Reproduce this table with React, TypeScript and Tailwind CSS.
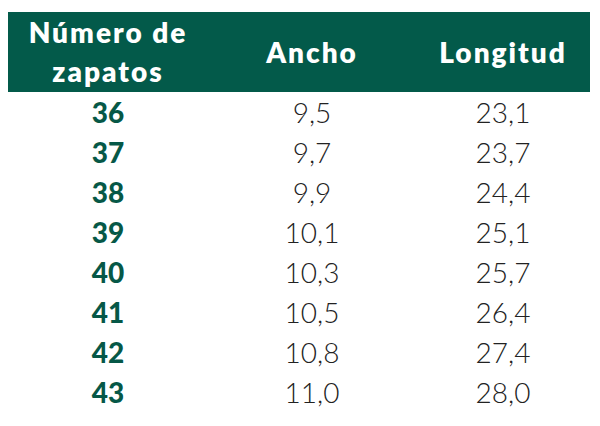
const rows = [
  ["36", "9,5", "23,1"],
  ["37", "9,7", "23,7"],
  ["38", "9,9", "24,4"],
  ["39", "10,1", "25,1"],
  ["40", "10,3", "25,7"],
  ["41", "10,5", "26,4"],
  ["42", "10,8", "27,4"],
  ["43", "11,0", "28,0"],
];

export default function App() {
  return (
    <div className="w-[600px] h-[426px] bg-white pt-3 pl-2 font-['Lato',sans-serif]">
      <div className="w-[582px]">
        {/* Header */}
        <div className="grid grid-cols-[200px_208px_174px] h-[80px] bg-[#035a4a] text-white font-extrabold text-[28px] leading-[39px] tracking-[2px] items-center text-center">
          <div>
            Número de
            <br />
            zapatos
          </div>
          <div>Ancho</div>
          <div>Longitud</div>
        </div>

        {/* Rows */}
        {rows.map(([size, width, length]) => (
          <div
            key={size}
            className="grid grid-cols-[200px_208px_174px] h-[40px] items-center text-center text-[28px] leading-[40px]"
          >
            <div className="font-black text-[#065847]">{size}</div>
            <div className="font-light text-[#222222]">{width}</div>
            <div className="font-light text-[#222222]">{length}</div>
          </div>
        ))}
      </div>
    </div>
  );
}
